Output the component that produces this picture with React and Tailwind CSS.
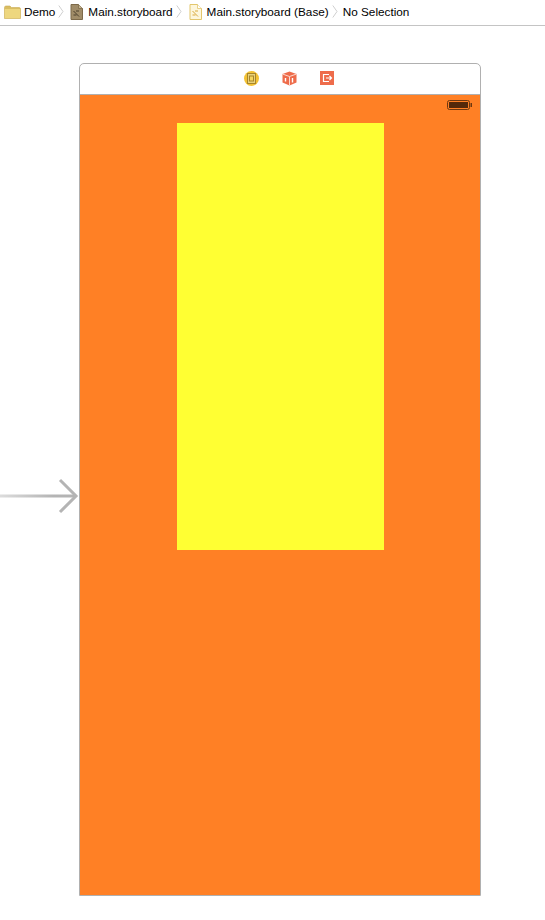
const FolderIcon = () => (
  <svg width="17" height="14" viewBox="0 0 17 14">
    <path d="M0.5 2.5 Q0.5 1 2 1 H6 L7.5 2.5 H15 Q16.5 2.5 16.5 4 V13.5 H0.5 Z" fill="#d9bd62" stroke="#c9ab52" strokeWidth="0.6" />
    <rect x="0.8" y="4" width="15.4" height="9.2" fill="#eed77f" />
  </svg>
);

const DocIcon = ({ base = false }) => (
  <svg width="13" height="16" viewBox="0 0 13 16">
    <path
      d="M1 0.5 H8.5 L12.5 4.5 V15.5 H1 Z"
      fill={base ? "#fdf6dc" : "#a08c68"}
      stroke={base ? "#e3c66c" : "#7d6a4a"}
      strokeWidth="1"
    />
    <path d="M8.5 0.5 V4.5 H12.5" fill={base ? "#fff" : "#c4b48f"} stroke={base ? "#e3c66c" : "#7d6a4a"} strokeWidth="0.8" />
    <path d="M3.5 7 L9 12.5 M3.5 11 H6.5 M6 7 H9" stroke={base ? "#d9a93c" : "#4a3e2a"} strokeWidth="1" fill="none" />
  </svg>
);

const Chevron = () => (
  <svg width="6" height="13" viewBox="0 0 6 13">
    <path d="M0.8 0.5 L5 6.5 L0.8 12.5" fill="none" stroke="#cfcfcf" strokeWidth="1" />
  </svg>
);

const VcIcon = () => (
  <svg width="15" height="15" viewBox="0 0 15 15">
    <circle cx="7.5" cy="7.5" r="7.5" fill="#f3c234" />
    <rect x="3.5" y="2.5" width="8" height="10" fill="#e9d27c" stroke="#a8862a" strokeWidth="1" />
    <rect x="5.5" y="5" width="4" height="5" fill="#f4d55f" stroke="#a8862a" strokeWidth="1" />
  </svg>
);

const CubeIcon = () => (
  <svg width="15" height="15" viewBox="0 0 15 15">
    <path d="M7.5 0.5 L14.5 3 V11.5 L7.5 14.5 L0.5 11.5 V3 Z" fill="#ee6c4b" />
    <path d="M0.5 3 L7.5 5.5 L14.5 3 M7.5 5.5 V14.5" fill="none" stroke="#fbd9cf" strokeWidth="1" />
    <path d="M3.5 7 V10.5 M10.5 7 V11.5" stroke="#fff" strokeWidth="1.4" />
  </svg>
);

const ExitIcon = () => (
  <svg width="14" height="14" viewBox="0 0 14 14">
    <rect width="14" height="14" fill="#ee6c4b" />
    <path d="M9 3.5 H3.5 V10.5 H9" fill="none" stroke="#fff" strokeWidth="1.2" />
    <path d="M6 7 H11.5 M9.5 5 L11.5 7 L9.5 9" fill="none" stroke="#fff" strokeWidth="1.2" />
  </svg>
);

const Battery = () => (
  <svg width="25" height="10" viewBox="0 0 25 10">
    <rect x="0.5" y="0.5" width="22" height="9" rx="2" fill="none" stroke="#6e3810" strokeWidth="1" />
    <rect x="2" y="2" width="19" height="6" fill="#55290a" />
    <rect x="23.5" y="3" width="1.5" height="4" fill="#6e3810" />
  </svg>
);

const EntryArrow = () => (
  <svg width="79" height="36" viewBox="0 0 79 36" className="shrink-0">
    <defs>
      <linearGradient id="fade" x1="0" x2="1" y1="0" y2="0">
        <stop offset="0" stopColor="#dcdcdc" />
        <stop offset="0.7" stopColor="#b4b4b4" />
      </linearGradient>
    </defs>
    <rect x="0" y="16.5" width="76" height="3" fill="url(#fade)" />
    <path d="M60 2 L76 18 L60 34" fill="none" stroke="#b4b4b4" strokeWidth="3" />
  </svg>
);

export default function App() {
  return (
    <div className="w-[545px] h-[920px] bg-white overflow-hidden font-['Liberation_Sans',sans-serif]">
      <div className="h-[26px] border-b border-[#c4c4c4] flex items-center pl-1 pb-[2px] text-[11.75px] text-black whitespace-nowrap">
        <FolderIcon />
        <span className="ml-[3px]">Demo</span>
        <span className="ml-[3px]"><Chevron /></span>
        <span className="ml-[6px]"><DocIcon /></span>
        <span className="ml-[5px]">Main.storyboard</span>
        <span className="ml-[3px]"><Chevron /></span>
        <span className="ml-[7px]"><DocIcon base /></span>
        <span className="ml-[5px]">Main.storyboard (Base)</span>
        <span className="ml-[3px]"><Chevron /></span>
        <span className="ml-[5px]">No Selection</span>
      </div>

      <div className="relative mt-[37px] ml-[79px] w-[402px] h-[833px] border border-[#b0b0b0] rounded-t-[5px] flex flex-col">
        <div className="h-[31px] shrink-0 border-b border-[#b0b0b0] flex items-center justify-center gap-[23px] pl-[18px] pb-[2px] rounded-t-[4px]">
          <VcIcon />
          <CubeIcon />
          <ExitIcon />
        </div>
        <div className="relative flex-1 bg-[#ff8025] pt-[28px] pl-[97px]">
          <div className="absolute top-[5px] right-[8px]">
            <Battery />
          </div>
          <div className="w-[207px] h-[427px] bg-[#ffff33]" />
        </div>
        <div className="absolute left-[-80px] top-[414px]">
          <EntryArrow />
        </div>
      </div>
    </div>
  );
}
